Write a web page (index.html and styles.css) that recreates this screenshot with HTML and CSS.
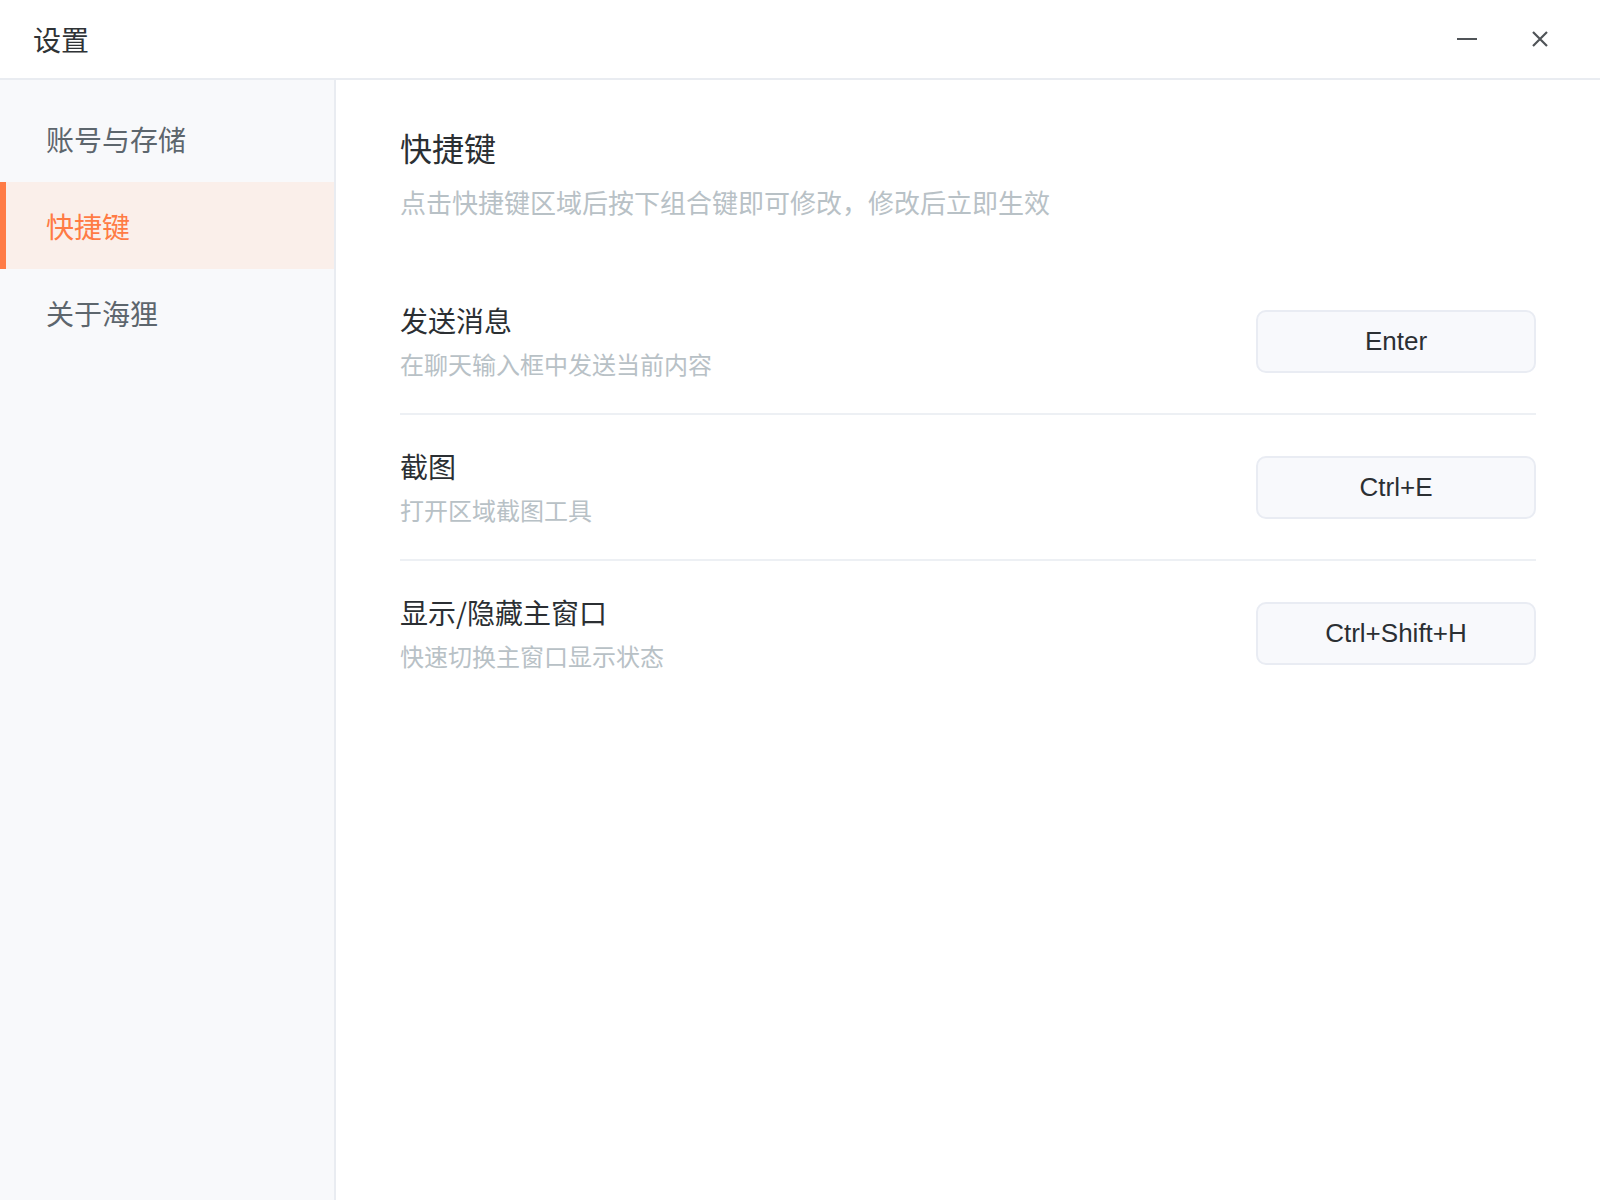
FILE: index.html
```html
<!DOCTYPE html>
<html lang="zh-CN">
<head>
<meta charset="utf-8">
<title>设置</title>
<link rel="stylesheet" href="styles.css">
</head>
<body>
<div class="window">
  <header class="titlebar">
    <div class="title">设置</div>
    <div class="controls">
      <button class="ctl" aria-label="最小化">
        <svg width="22" height="22" viewBox="0 0 22 22"><line x1="1" y1="11" x2="21" y2="11" stroke="#505458" stroke-width="2"/></svg>
      </button>
      <button class="ctl" aria-label="关闭">
        <svg width="18" height="18" viewBox="0 0 18 18"><path d="M2 2L16 16M16 2L2 16" stroke="#505458" stroke-width="2.2" fill="none"/></svg>
      </button>
    </div>
  </header>
  <div class="body">
    <nav class="sidebar">
      <div class="nav-item">账号与存储</div>
      <div class="nav-item active">快捷键</div>
      <div class="nav-item">关于海狸</div>
    </nav>
    <main class="content">
      <h1 class="heading">快捷键</h1>
      <p class="subtitle">点击快捷键区域后按下组合键即可修改，修改后立即生效</p>
      <div class="list">
        <div class="row">
          <div class="info">
            <div class="row-title">发送消息</div>
            <div class="row-desc">在聊天输入框中发送当前内容</div>
          </div>
          <div class="key">Enter</div>
        </div>
        <div class="row">
          <div class="info">
            <div class="row-title">截图</div>
            <div class="row-desc">打开区域截图工具</div>
          </div>
          <div class="key">Ctrl+E</div>
        </div>
        <div class="row last">
          <div class="info">
            <div class="row-title">显示/隐藏主窗口</div>
            <div class="row-desc">快速切换主窗口显示状态</div>
          </div>
          <div class="key">Ctrl+Shift+H</div>
        </div>
      </div>
    </main>
  </div>
</div>
</body>
</html>
```

FILE: styles.css
```css
* { box-sizing: border-box; }
html, body {
  margin: 0;
  padding: 0;
  height: 100%;
  background: #ffffff;
  font-family: "Noto Sans CJK SC", "Liberation Sans", sans-serif;
}
.window {
  display: flex;
  flex-direction: column;
  height: 1200px;
  width: 1600px;
}
.titlebar {
  height: 80px;
  flex: none;
  display: flex;
  align-items: center;
  justify-content: space-between;
  padding: 0 40px 0 33px;
  border-bottom: 2px solid #e9ecf1;
}
.title {
  font-size: 28px;
  line-height: 40px;
  color: #2f3336;
}
.controls {
  display: flex;
  align-items: center;
  gap: 33px;
}
.ctl {
  width: 40px;
  height: 40px;
  border: 0;
  padding: 0;
  background: transparent;
  display: flex;
  align-items: center;
  justify-content: center;
}
.body {
  flex: 1;
  display: flex;
  min-height: 0;
}
.sidebar {
  width: 336px;
  flex: none;
  background: #f8f9fb;
  border-right: 2px solid #e9ecf1;
  padding-top: 15px;
}
.nav-item {
  height: 87px;
  display: flex;
  align-items: center;
  padding-left: 40px;
  font-size: 28px;
  color: #5d666d;
  border-left: 6px solid transparent;
}
.nav-item.active {
  background: #faefea;
  color: #ff7b45;
  border-left-color: #ff7b45;
}
.content {
  flex: 1;
  padding: 45px 64px 0 64px;
}
.heading {
  margin: 0;
  font-size: 32px;
  font-weight: normal;
  line-height: 44px;
  color: #2b2f33;
}
.subtitle {
  margin: 15px 0 0;
  font-size: 26px;
  line-height: 36px;
  color: #b8c1c6;
}
.list {
  margin-top: 49px;
}
.row {
  display: flex;
  align-items: center;
  justify-content: space-between;
  padding: 31px 0;
  border-bottom: 2px solid #edf0f4;
}
.row.last {
  border-bottom: 0;
}
.row-title {
  font-size: 28px;
  line-height: 40px;
  color: #2b2f33;
}
.row-desc {
  margin-top: 6px;
  font-size: 24px;
  line-height: 36px;
  color: #b8c1c6;
}
.key {
  width: 280px;
  height: 63px;
  display: flex;
  align-items: center;
  justify-content: center;
  background: #f8f9fc;
  border: 2px solid #e9ecf3;
  border-radius: 10px;
  font-family: "Liberation Sans", Arial, sans-serif;
  font-size: 26px;
  color: #2b2f33;
}
```
